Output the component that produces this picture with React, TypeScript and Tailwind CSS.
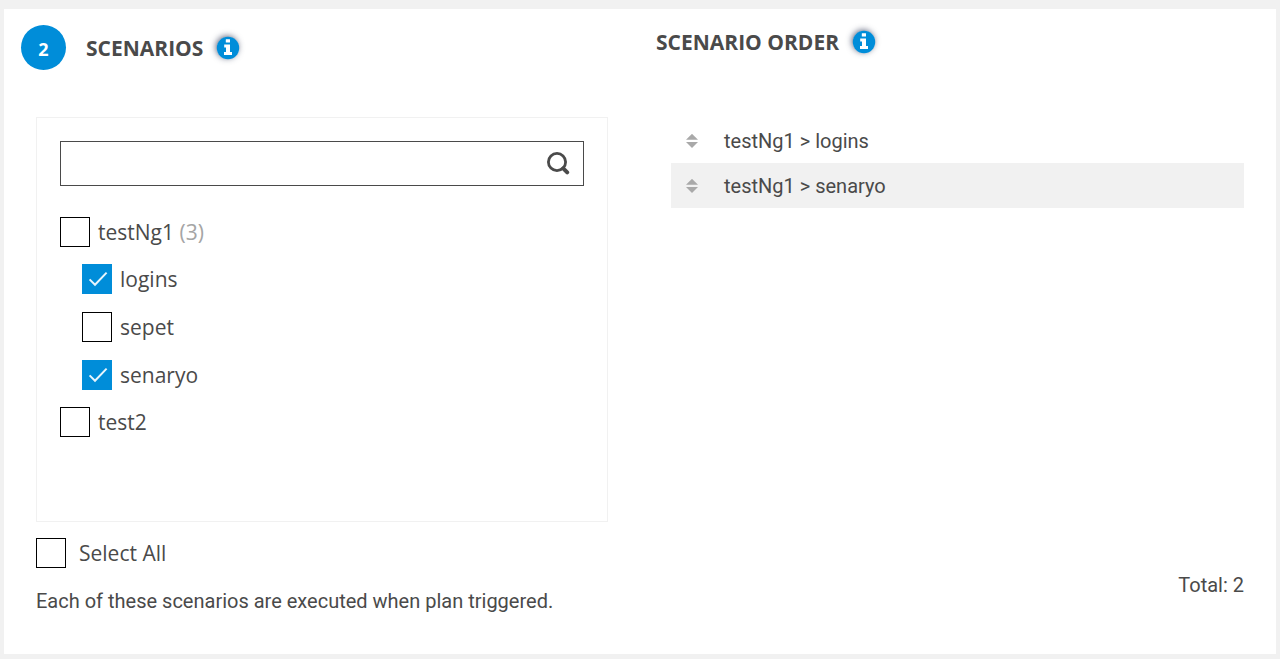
import { useState } from "react";

const SUITE = "testNg1";

function InfoButton({ label }: { label: string }) {
  return (
    <button
      type="button"
      aria-label={label}
      className="flex size-[22px] items-center justify-center rounded-full shadow-[-1px_-1px_6px_rgba(40,50,80,0.75)]"
    >
      <svg viewBox="0 0 24 24" className="size-6 shrink-0" aria-hidden="true">
        <circle cx="12" cy="12" r="11.2" fill="#008dd9" />
        <g fill="#fff">
          <rect x="9.8" y="3.2" width="4.2" height="3.4" rx="0.4" />
          <path d="M8.2 8.4H14V16H16V19H8V16H10V11.4H8.2z" />
        </g>
      </svg>
    </button>
  );
}

function SearchIcon() {
  return (
    <svg viewBox="0 0 24 24" className="size-6" fill="none" stroke="#4a4a4a" aria-hidden="true">
      <circle cx="11" cy="10" r="8.6" strokeWidth="2.8" />
      <path d="M17.2 16.3 21.2 20.3" strokeWidth="4" strokeLinecap="round" />
    </svg>
  );
}

function SortIcon() {
  return (
    <svg viewBox="0 0 12 14" className="h-[14px] w-3" fill="#a9a9a9" aria-hidden="true">
      <path d="M6 -0.2 12 5.8H0z" />
      <path d="M6 14 0 8H12z" />
    </svg>
  );
}

type CheckProps = {
  id: string;
  label: string;
  count?: number;
  wide?: boolean;
  checked: boolean;
  onChange: (value: boolean) => void;
};

function Check({ id, label, count, wide, checked, onChange }: CheckProps) {
  return (
    <div className={wide ? "flex h-[30px] items-center gap-[13px]" : "flex h-[30px] items-center gap-2"}>
      <span className="relative flex size-[30px]">
        <input
          id={id}
          type="checkbox"
          checked={checked}
          onChange={(e) => onChange(e.target.checked)}
          className="peer size-[30px] cursor-pointer appearance-none border border-black bg-white checked:border-[#008dd9] checked:bg-[#008dd9]"
        />
        <svg
          viewBox="0 0 30 30"
          className="pointer-events-none absolute inset-0 hidden size-[30px] peer-checked:block"
          fill="none"
          stroke="#e8f5fc"
          strokeWidth="2"
          aria-hidden="true"
        >
          <path d="M7.6 15.4 13 20.8 24.6 8.6" />
        </svg>
      </span>
      <label htmlFor={id} className="cursor-pointer text-[21px] leading-[30px]">
        {label}
        {count !== undefined && <span className="text-[#a5a5a5]"> ({count})</span>}
      </label>
    </div>
  );
}

export default function App() {
  const [query, setQuery] = useState("");
  const [suite, setSuite] = useState(false);
  const [other, setOther] = useState(false);
  const [all, setAll] = useState(false);
  const [items, setItems] = useState([
    { name: "logins", checked: true },
    { name: "sepet", checked: false },
    { name: "senaryo", checked: true },
  ]);

  const toggle = (name: string, checked: boolean) =>
    setItems(items.map((item) => (item.name === name ? { ...item, checked } : item)));

  const toggleSuite = (checked: boolean) => {
    setSuite(checked);
    setItems(items.map((item) => ({ ...item, checked })));
  };

  const toggleAll = (checked: boolean) => {
    setAll(checked);
    setOther(checked);
    toggleSuite(checked);
  };

  const order = items.filter((item) => item.checked);

  return (
    <div className="min-h-screen bg-[#f1f1f1] px-1 pt-[9px] pb-[5px] font-['Open_Sans',sans-serif] text-[#4a4a4a]">
      <main className="grid grid-cols-2 bg-white pt-4 pb-10">
        <section className="flex flex-col">
          <header className="flex h-[45px] items-center pl-[17px]">
            <span className="flex size-[45px] items-center justify-center rounded-full bg-[#008dd9] pt-[3px] text-lg font-bold text-white">
              2
            </span>
            <h2 className="ml-5 text-[21px] leading-7 font-bold">SCENARIOS</h2>
            <span className="ml-[14px]">
              <InfoButton label="About scenarios" />
            </span>
          </header>

          <div className="mx-8 mt-[47px] min-h-[405px] border border-[#f1f1f1] p-[23px]">
            <div className="flex h-[45px] items-center border border-[#4a4a4a] pr-[13px]">
              <input
                type="text"
                aria-label="Search scenarios"
                value={query}
                onChange={(e) => setQuery(e.target.value)}
                className="h-full min-w-0 flex-1 px-3 text-lg outline-none"
              />
              <button type="button" aria-label="Search">
                <SearchIcon />
              </button>
            </div>

            <div className="mt-[31px] flex flex-col gap-[17px]">
              <Check id="suite" label={SUITE} count={items.length} checked={suite} onChange={toggleSuite} />
              <div className="flex flex-col gap-[18px] pl-[22px]">
                {items
                  .filter((item) => item.name.includes(query))
                  .map((item) => (
                    <Check
                      key={item.name}
                      id={item.name}
                      label={item.name}
                      checked={item.checked}
                      onChange={(value) => toggle(item.name, value)}
                    />
                  ))}
              </div>
              <Check id="test2" label="test2" checked={other} onChange={setOther} />
            </div>
          </div>

          <div className="mx-8 mt-4">
            <Check id="all" label="Select All" wide checked={all} onChange={toggleAll} />
            <p className="mt-5 font-['Roboto',sans-serif] text-xl leading-[26px]">
              Each of these scenarios are executed when plan triggered.
            </p>
          </div>
        </section>

        <section className="flex flex-col">
          <header className="flex h-[34px] items-center pl-4">
            <h2 className="text-[21px] leading-7 font-bold">SCENARIO ORDER</h2>
            <span className="ml-[14px]">
              <InfoButton label="About scenario order" />
            </span>
          </header>

          <ol className="mt-[59px] mr-8 ml-[31px] font-['Roboto',sans-serif] text-xl">
            {order.map((item) => (
              <li key={item.name} className="flex h-[45px] items-center pl-[15px] even:bg-[#f1f1f1]">
                <SortIcon />
                <span className="ml-[26px]">
                  {SUITE} &gt; {item.name}
                </span>
              </li>
            ))}
          </ol>

          <p className="mt-auto mr-8 pb-4 text-right font-['Roboto',sans-serif] text-xl leading-[26px]">
            Total: {order.length}
          </p>
        </section>
      </main>
    </div>
  );
}
